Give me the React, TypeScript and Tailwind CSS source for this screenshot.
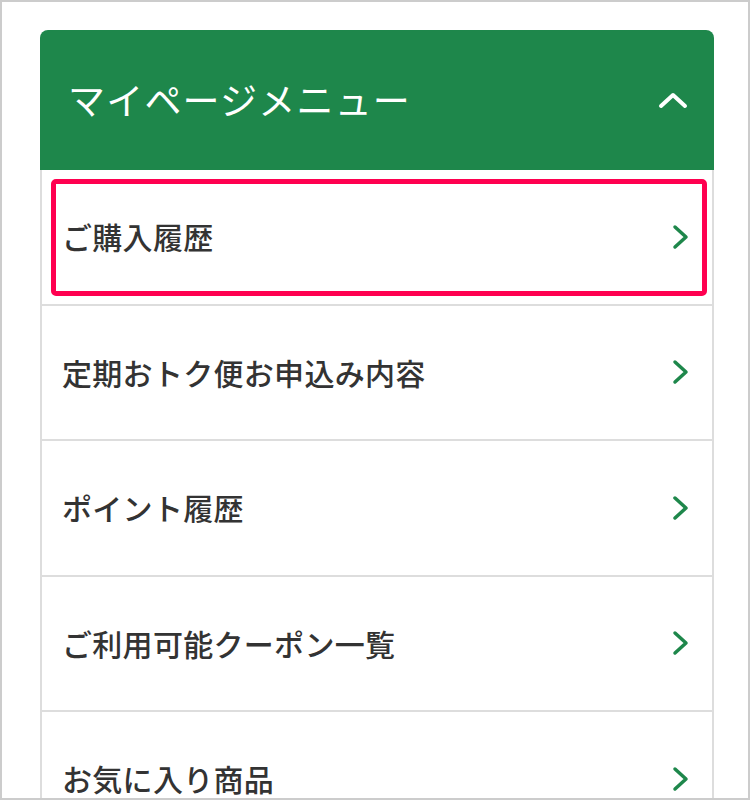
import React from 'react';

const items = [
  'ご購入履歴',
  '定期おトク便お申込み内容',
  'ポイント履歴',
  'ご利用可能クーポン一覧',
  'お気に入り商品',
];

const ChevronRight = () => (
  <svg width="18" height="28" viewBox="0 0 18 28" fill="none">
    <polyline points="3,4 14,14 3,24" stroke="#1e874b" strokeWidth="3.5" strokeLinecap="round" strokeLinejoin="round" />
  </svg>
);

const ChevronUp = () => (
  <svg width="30" height="18" viewBox="0 0 30 18" fill="none">
    <polyline points="3,15 15,4 27,15" stroke="#ffffff" strokeWidth="4" strokeLinecap="round" strokeLinejoin="round" />
  </svg>
);

export default function App() {
  return (
    <div
      className="w-[750px] h-[800px] border-2 border-[#cccccc] bg-white overflow-hidden pt-[28px] pl-[38px]"
      style={{ fontFamily: '"Noto Sans CJK JP", "Noto Sans", sans-serif' }}
    >
      <div className="w-[674px]">
        {/* header */}
        <div className="h-[140px] bg-[#1e874b] rounded-t-[8px] flex items-center justify-between pl-[28px] pr-[26px]">
          <span className="text-[37px] font-normal text-white tracking-[1.2px]">マイページメニュー</span>
          <ChevronUp />
        </div>

        {/* menu rows */}
        <div className="border-x-2 border-[#dddddd]">
          {items.map((label, i) => (
            <div
              key={i}
              className="relative h-[135.5px] border-b-2 border-[#dddddd] flex items-center justify-between pl-[20px] pr-[22px]"
            >
              <span className="text-[30px] font-medium text-[#333333] tracking-[0.3px]">{label}</span>
              <ChevronRight />
              {i === 0 && (
                <div className="absolute left-[9px] right-[5px] top-[9px] bottom-[8px] border-[5px] border-[#ff0050] rounded-[5px]" />
              )}
            </div>
          ))}
        </div>
      </div>
    </div>
  );
}
